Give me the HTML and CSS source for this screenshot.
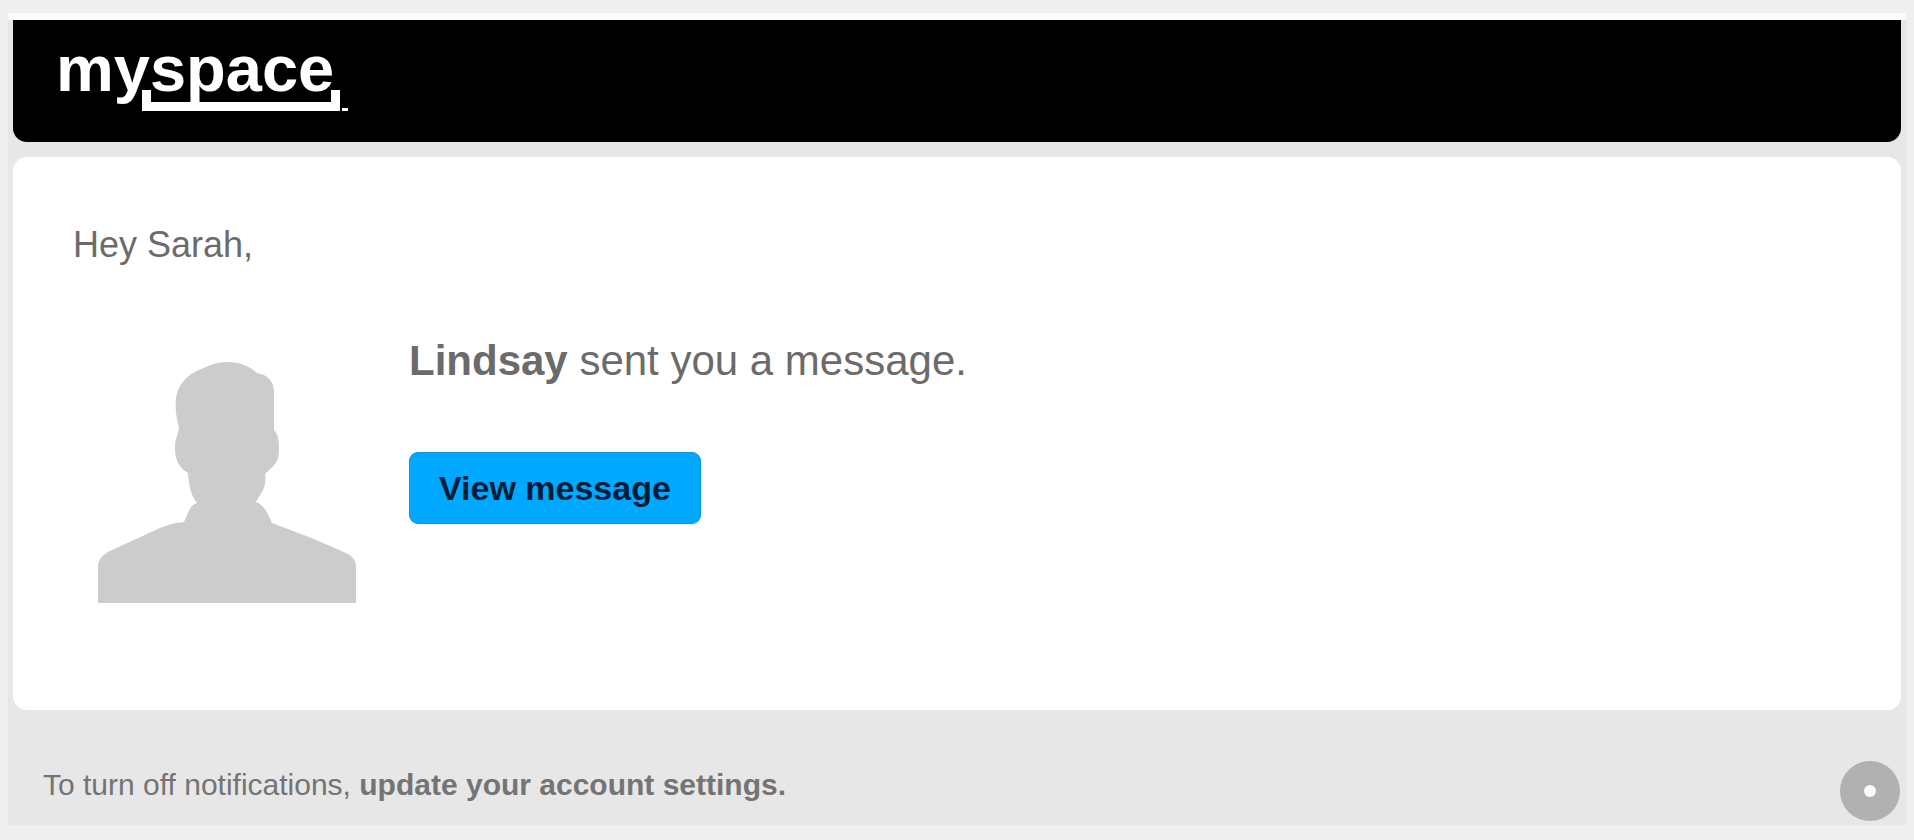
FILE: index.html
```html
<!DOCTYPE html>
<html lang="en">

<head>
    <meta charset="UTF-8">
    <meta name="viewport" content="width=device-width, initial-scale=1.0">
    <title>Myspace</title>

    <link rel="stylesheet" href="styles.css">
</head>

<body>

    <div class="email">
        <header class="header">
            <svg class="logo" width="300" height="90" viewBox="0 0 300 90" role="img" aria-label="myspace">
                <text class="logo__text" x="1" y="66">myspace</text>
                <path d="M87 65h9v12h180v-12h9v21h-198z" />
                <path d="M287 83h6v3h-6z" />
            </svg>
        </header>

        <main class="card">
            <p class="greeting">Hey Sarah,</p>

            <div class="message">
                <svg class="avatar" width="260" height="242" viewBox="0 0 260 242" aria-hidden="true">
                    <path d="M130 1C142 1 151 5 159 12C170 14 176 20 176 32V69C180 73 181 79 181 87C181 103 176 104 167 113C169 127 163 132 158 141C168 145 170 154 174 162L216 178L248 192Q257 196 258 204V242H0V204C1 197 7 192 14 189L62 167Q74 162 86 161C91 151 91 145 99 142C93 134 91 126 90 112C80 106 77 98 77 86C77 78 80 74 81 67C78 56 77 46 78 37C80 25 87 16 97 11C109 5 118 1 130 1Z" />
                </svg>
                <div class="message__body">
                    <p class="message__text"><strong>Lindsay</strong> sent you a message.</p>
                    <a class="message__link" href="#">View message</a>
                </div>
            </div>
        </main>

        <footer class="footer">
            To turn off notifications, <a href="#">update your account settings.</a>
        </footer>
    </div>

    <button class="bubble" type="button" aria-label="More"></button>

</body>

</html>
```

FILE: styles.css
```css
* {
    box-sizing: border-box;
}

body {
    margin: 13px 8px 15px;
    background: #efefef;
    color: #6b6b6b;
    font-family: "Liberation Sans", Arial, Helvetica, sans-serif;
}

p {
    margin: 0;
}

.email {
    padding: 0 5px;
    border-top: 7px solid #fbfbfb;
    background: #e7e7e7;
}

.header {
    padding: 5px 42px 27px;
    border-radius: 0 0 14px 14px;
    background: #000;
}

.logo {
    display: block;
    fill: #fff;
}

.logo__text {
    font-size: 65px;
    font-weight: 700;
}

.card {
    margin-top: 15px;
    padding: 68px 60px 107px;
    border-radius: 14px;
    background: #fff;
}

.greeting {
    font-size: 36px;
    line-height: 40px;
}

.message {
    display: flex;
    gap: 51px;
    margin-top: 72px;
    padding-left: 25px;
}

.avatar {
    flex: none;
    margin-top: 24px;
    fill: #ccc;
}

.message__text {
    font-size: 42px;
    line-height: 48px;
}

.message__link {
    display: inline-block;
    margin-top: 67px;
    padding: 0 29px;
    border: 1px solid #0a96e2;
    border-radius: 9px;
    background: #00a8ff;
    color: #001c38;
    font-size: 34px;
    font-weight: 700;
    line-height: 70px;
    text-decoration: none;
}

.footer {
    padding: 55px 30px 20px;
    color: #747474;
    font-size: 30px;
    line-height: 40px;
}

.footer a {
    color: inherit;
    font-weight: 700;
    text-decoration: none;
}

.bubble {
    display: flex;
    align-items: center;
    justify-content: center;
    position: fixed;
    right: 14px;
    bottom: 19px;
    width: 60px;
    height: 60px;
    padding: 0;
    border: 0;
    border-radius: 50%;
    background: #b1b1b1;
}

.bubble::before {
    content: "";
    width: 12px;
    height: 12px;
    border-radius: 50%;
    background: #fafafa;
}
```
